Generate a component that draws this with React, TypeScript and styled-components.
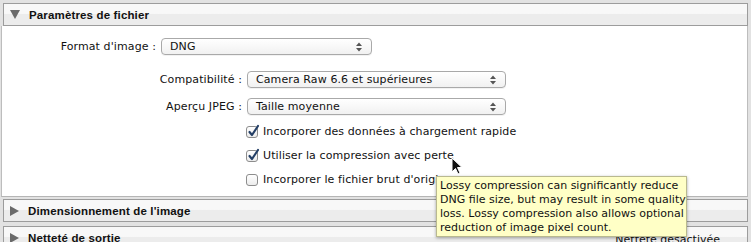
import React from 'react'
import styled, { createGlobalStyle } from 'styled-components'

const Global = createGlobalStyle`
  html, body { margin: 0; padding: 0; }
  body {
    background: #e2e2e2;
    font-family: "DejaVu Sans", "Liberation Sans", sans-serif;
    font-size: 11px;
    letter-spacing: 0.1px;
    color: #111;
    width: 751px;
    height: 242px;
    overflow: hidden;
  }
`

const Frame = styled.div`
  position: relative;
  padding: 3px 3px 0 1px;
  display: flex;
  flex-direction: column;
`

const Header = styled.div<{ $gap?: number }>`
  display: flex;
  align-items: center;
  height: 21px;
  margin: ${({ $gap }) => $gap ?? 0}px 0 0 2px;
  border: 1px solid #9c9c9c;
  background: linear-gradient(#f8f8f8 0%, #f8f8f8 45%, #ececec 50%, #ececec 100%);
  font-family: "Liberation Sans", Arial, sans-serif;
  font-weight: bold;
  font-size: 11.5px;
  letter-spacing: 0.15px;
  padding: 0 27px 0 6px;
`

const Arrow = styled.span<{ $open?: boolean }>`
  width: 0;
  height: 0;
  margin-right: 9px;
  ${({ $open }) =>
    $open
      ? `border-left: 5px solid transparent; border-right: 5px solid transparent; border-top: 9px solid #6a6a6a;`
      : `border-top: 5px solid transparent; border-bottom: 5px solid transparent; border-left: 9px solid #6a6a6a;`}
`

const Title = styled.span`
  flex: 1;
`

const Side = styled.span`
  font-family: "DejaVu Sans", sans-serif;
  font-weight: normal;
  font-size: 11px;
  letter-spacing: 0;
  margin-top: 3px;
`

const Body = styled.div`
  background: #fff;
  border-left: 1px solid #bdbdbd;
  border-right: 1px solid #bdbdbd;
  border-bottom: 1px solid #b5b5b5;
  height: 171px;
  display: flex;
  flex-direction: column;
  padding-top: 12px;
  box-sizing: border-box;
`

const Row = styled.div<{ $label: number; $top: number }>`
  display: grid;
  grid-template-columns: ${({ $label }) => $label}px auto;
  align-items: center;
  column-gap: 5px;
  margin-top: ${({ $top }) => $top}px;
`

const Label = styled.span`
  text-align: right;
`

const Select = styled.div<{ $w: number }>`
  position: relative;
  width: ${({ $w }) => $w}px;
  height: 17px;
  box-sizing: border-box;
  border: 1px solid #a9a9a9;
  border-radius: 4px;
  background: linear-gradient(#ffffff, #f1f1f1);
  box-shadow: 0 1px 0 rgba(0, 0, 0, 0.05);
  padding: 0 0 0 8px;
  display: flex;
  align-items: center;
  line-height: 15px;
`

const Updown = styled.svg`
  position: absolute;
  right: 9px;
  top: 3px;
`

const Check = styled.label<{ $top: number }>`
  display: flex;
  align-items: center;
  margin: ${({ $top }) => $top}px 0 0 244px;
  gap: 5px;
`

const Box = styled.span`
  width: 12px;
  height: 12px;
  box-sizing: border-box;
  border: 1px solid #8d8d8d;
  border-radius: 3px;
  background: linear-gradient(#ffffff, #ececec);
  position: relative;
  display: inline-block;
`

const Tick = styled.svg`
  position: absolute;
  left: 0;
  top: -3px;
`

const Tooltip = styled.div`
  position: absolute;
  left: 436px;
  top: 176px;
  width: 251px;
  box-sizing: border-box;
  background: #ffffc6;
  border: 1px solid #b9b98f;
  box-shadow: 0 1px 3px rgba(0, 0, 0, 0.35);
  padding: 2px 3px 1px 3px;
  font-size: 11px;
  letter-spacing: 0;
  line-height: 14px;
  white-space: nowrap;
`

const Cursor = styled.svg`
  position: absolute;
  left: 451px;
  top: 157px;
`

function Choice({ text, w }: { text: string; w: number }) {
  return (
    <Select $w={w}>
      {text}
      <Updown width="6" height="10" viewBox="0 0 6 10">
        <path d="M0 4 L3 0.5 L6 4 Z M0 6 L3 9.5 L6 6 Z" fill="#555" />
      </Updown>
    </Select>
  )
}

function Option({ text, checked, top }: { text: string; checked?: boolean; top: number }) {
  return (
    <Check $top={top}>
      <Box>
        {checked && (
          <Tick width="13" height="14" viewBox="0 0 13 14">
            <path d="M2.5 8 L5 11 L11 2" stroke="#243f66" strokeWidth="2.2" fill="none" strokeLinecap="round" strokeLinejoin="round" />
          </Tick>
        )}
      </Box>
      <span>{text}</span>
    </Check>
  )
}

export default function App() {
  return (
    <>
      <Global />
      <Frame>
        <Header>
          <Arrow $open />
          <Title>Paramètres de fichier</Title>
        </Header>
        <Body>
          <Row $label={154} $top={0}>
            <Label>Format d'image :</Label>
            <Choice text="DNG" w={211} />
          </Row>
          <Row $label={240} $top={16}>
            <Label>Compatibilité :</Label>
            <Choice text="Camera Raw 6.6 et supérieures" w={259} />
          </Row>
          <Row $label={240} $top={10}>
            <Label>Aperçu JPEG :</Label>
            <Choice text="Taille moyenne" w={259} />
          </Row>
          <Option text="Incorporer des données à chargement rapide" checked top={10} />
          <Option text="Utiliser la compression avec perte" checked top={11} />
          <Option text="Incorporer le fichier brut d'origine" top={11} />
        </Body>
        <Header $gap={2}>
          <Arrow />
          <Title>Dimensionnement de l'image</Title>
        </Header>
        <Header $gap={4}>
          <Arrow />
          <Title>Netteté de sortie</Title>
          <Side>Netteté désactivée</Side>
        </Header>
        <Cursor width="12" height="19" viewBox="0 0 12 19">
          <path d="M1 1 L1 15 L4.5 11.5 L7 17 L9 16 L6.5 10.5 L11 10.5 Z" fill="#111" stroke="#fff" strokeWidth="1" />
        </Cursor>
        <Tooltip>
          Lossy compression can significantly reduce
          <br />
          DNG file size, but may result in some quality
          <br />
          loss. Lossy compression also allows optional
          <br />
          reduction of image pixel count.
        </Tooltip>
      </Frame>
    </>
  )
}
